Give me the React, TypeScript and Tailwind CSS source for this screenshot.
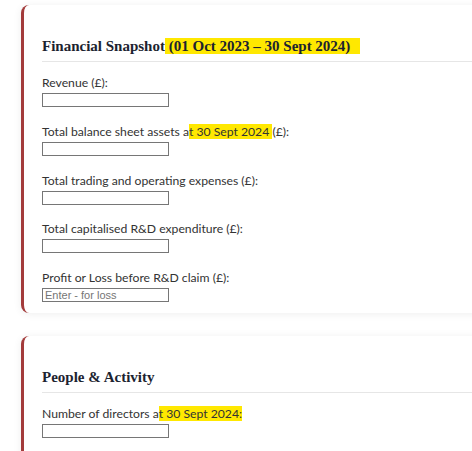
import type { ReactNode } from "react";

function Mark({ children, className = "" }: { children: ReactNode; className?: string }) {
  return <span className={`bg-[#ffe800] ${className}`}>{children}</span>;
}

function Field({ label, placeholder }: { label: ReactNode; placeholder?: string }) {
  return (
    <div className="mb-[15.75px] last:mb-0">
      <label className="block text-[12.2px] leading-[17px] text-[#333]">{label}</label>
      <input
        type="text"
        placeholder={placeholder}
        className="mt-[2px] block h-[14px] w-[127px] border border-[#767676] bg-white px-[2px] font-['Liberation_Sans',sans-serif] text-[11px] leading-[12px] placeholder:text-[#757575]"
      />
    </div>
  );
}

function Card({ title, children, className = "" }: { title: ReactNode; children: ReactNode; className?: string }) {
  return (
    <section
      className={`w-[520px] rounded-lg border-l-[3px] border-[#a33b3b] bg-white pl-[18px] pt-[31px] shadow-[0_1px_8px_rgba(0,0,0,0.07)] ${className}`}
    >
      <h2 className="border-b border-[#e6e6e6] pb-[5px] font-['Liberation_Serif',serif] text-[15px] font-bold leading-[20px] text-[#1c2330]">
        {title}
      </h2>
      <div className="mt-[12px]">{children}</div>
    </section>
  );
}

export default function App() {
  return (
    <div className="h-[451px] w-[472px] overflow-hidden bg-white pl-[21px] pt-[5px] font-['Lato',sans-serif]">
      <Card
        className="pb-[11px]"
        title={
          <>
            Financial Snapshot<Mark className="pr-[10px]"> (01 Oct 2023 – 30 Sept 2024)</Mark>
          </>
        }
      >
        <Field label="Revenue (£):" />
        <Field
          label={
            <>
              Total balance sheet assets a<Mark>t 30 Sept 2024 </Mark>(£):
            </>
          }
        />
        <Field label="Total trading and operating expenses (£):" />
        <Field label="Total capitalised R&D expenditure (£):" />
        <Field label="Profit or Loss before R&D claim (£):" placeholder="Enter - for loss" />
      </Card>
      <div className="h-[23px]" />
      <Card className="pb-[40px]" title="People & Activity">
        <Field
          label={
            <>
              Number of directors a<Mark>t 30 Sept 2024:</Mark>
            </>
          }
        />
      </Card>
    </div>
  );
}
